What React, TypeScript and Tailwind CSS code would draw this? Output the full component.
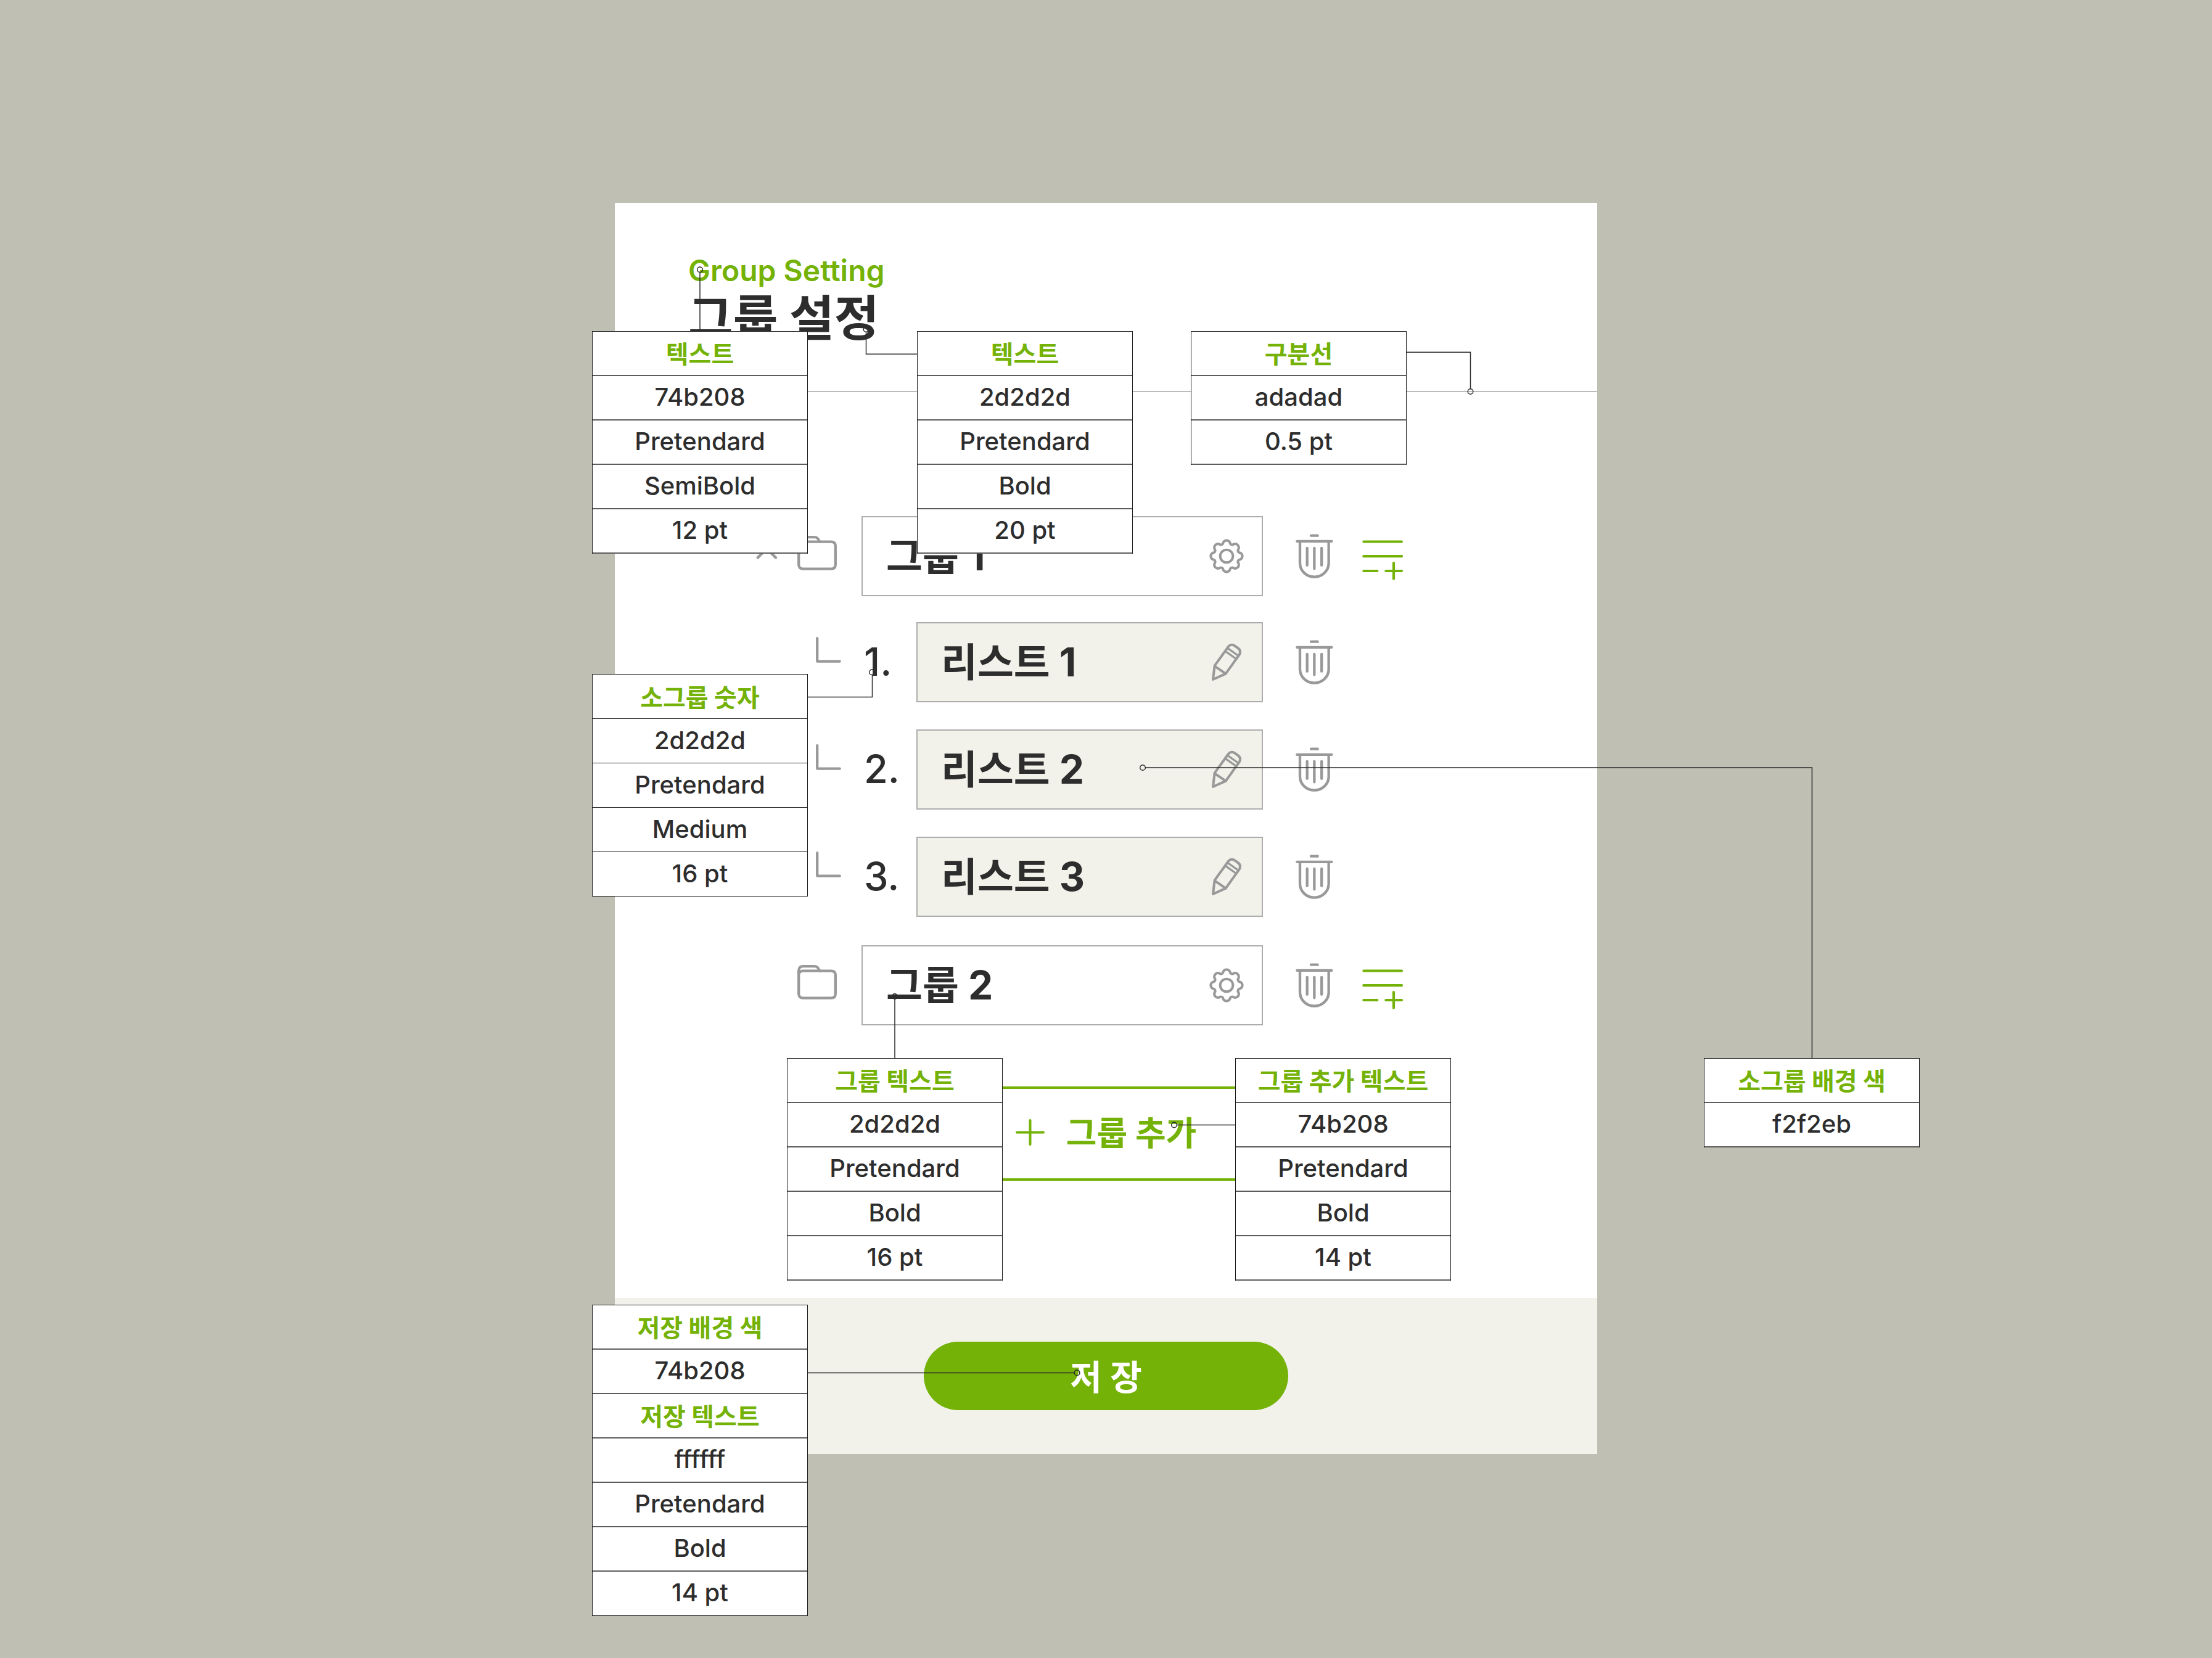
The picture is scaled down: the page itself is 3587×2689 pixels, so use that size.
import React from "react";

type Spec = { text: string; title?: boolean };
type Callout = { place: string; rule: string; label: string; rows: Spec[] };

const t = (text: string): Spec => ({ text, title: true });
const v = (text: string): Spec => ({ text });

const SOFT = "border-b-2 border-b-[#5c5c5c]";
const CRISP = "border-b border-b-[#1c1c1c]";

const callouts: Callout[] = [
  { place: "left-[-37px] top-[208px]", rule: SOFT, label: "소제목 텍스트 사양", rows: [t("텍스트"), v("74b208"), v("Pretendard"), v("SemiBold"), v("12 pt")] },
  { place: "left-[490px] top-[208px]", rule: SOFT, label: "제목 텍스트 사양", rows: [t("텍스트"), v("2d2d2d"), v("Pretendard"), v("Bold"), v("20 pt")] },
  { place: "left-[934px] top-[208px]", rule: SOFT, label: "구분선 사양", rows: [t("구분선"), v("adadad"), v("0.5 pt")] },
  { place: "left-[-37px] top-[764px]", rule: CRISP, label: "소그룹 숫자 사양", rows: [t("소그룹 숫자"), v("2d2d2d"), v("Pretendard"), v("Medium"), v("16 pt")] },
  { place: "left-[279px] top-[1387px]", rule: SOFT, label: "그룹 텍스트 사양", rows: [t("그룹 텍스트"), v("2d2d2d"), v("Pretendard"), v("Bold"), v("16 pt")] },
  { place: "left-[1006px] top-[1387px]", rule: SOFT, label: "그룹 추가 텍스트 사양", rows: [t("그룹 추가 텍스트"), v("74b208"), v("Pretendard"), v("Bold"), v("14 pt")] },
  { place: "left-[1766px] top-[1387px]", rule: SOFT, label: "소그룹 배경 색 사양", rows: [t("소그룹 배경 색"), v("f2f2eb")] },
  { place: "left-[-37px] top-[1787px]", rule: SOFT, label: "저장 버튼 사양", rows: [t("저장 배경 색"), v("74b208"), t("저장 텍스트"), v("ffffff"), v("Pretendard"), v("Bold"), v("14 pt")] },
];

function SpecTable({ place, rule, label, rows }: Callout) {
  return (
    <table
      aria-label={label}
      className={`absolute ${place} w-[350px] border-separate border-spacing-0 border-x border-t border-[#1c1c1c] bg-white text-center`}
    >
      <tbody>
        {rows.map((row, i) => (
          <tr key={i}>
            {row.title ? (
              <th scope="row" className={`h-[72px] p-0 pt-1 text-[40px] leading-[48px] font-bold text-[#74b208] ${rule}`}>
                {row.text}
              </th>
            ) : (
              <td className={`h-[72px] p-0 pb-0.5 text-[40px] leading-[48px] font-medium ${rule}`}>{row.text}</td>
            )}
          </tr>
        ))}
      </tbody>
    </table>
  );
}

/* Leader lines from each spec table to the element that it describes. */
function Connectors() {
  return (
    <svg className="pointer-events-none absolute inset-0 h-full w-full overflow-visible" fill="none" stroke="#2d2d2d" strokeWidth="1.5" aria-hidden="true">
      <circle cx="138" cy="108.3" r="4.3" />
      <path d="M138 112.6V209" />
      <circle cx="407.5" cy="205" r="4.3" />
      <path d="M407.5 209.3V245.2H491" />
      <path d="M1284 242.3H1387.5V301.5" />
      <circle cx="1387.5" cy="306" r="4.3" />
      <path d="M312 801.4H417.5V765.5" />
      <circle cx="417" cy="761.2" r="4.3" />
      <circle cx="454" cy="1287" r="4.3" />
      <path d="M454 1291.3V1388" />
      <circle cx="907" cy="1495.5" r="4.3" />
      <path d="M911.3 1495.5H1007" />
      <circle cx="856" cy="916" r="4.3" />
      <path d="M860.3 916H1941.4V1388" />
      <path d="M312 1897.4H745.3" />
      <circle cx="749.6" cy="1897.4" r="4.3" />
    </svg>
  );
}

function FolderIcon() {
  return (
    <svg className="h-14 w-16" viewBox="0 0 64 56" fill="none" stroke="#999" strokeWidth="4.3" strokeLinecap="round" strokeLinejoin="round">
      <path d="M2.2 16V9.5Q2.2 2.2 9.5 2.2H27C33 2.2 34.5 5 35.5 9.6H54.5Q61.8 9.6 61.8 16.8V46.5Q61.8 53.7 54.5 53.7H9.5Q2.2 53.7 2.2 46.5V16" />
      <path d="M2.6 14Q4 9.6 9.5 9.6H37.5" />
    </svg>
  );
}

function ChevronIcon() {
  return (
    <svg className="h-7 w-10" viewBox="0 0 40 28" fill="none" stroke="#999" strokeWidth="4.3" strokeLinecap="round" strokeLinejoin="round">
      <path d="M5.8 21.4 20.4 7 35 21.4" />
    </svg>
  );
}

function BranchIcon() {
  return (
    <svg className="h-[42px] w-[41px]" viewBox="0 0 41 42" fill="none" stroke="#999" strokeWidth="4.3" strokeLinecap="round" strokeLinejoin="round" aria-hidden="true">
      <path d="M2.2 2.2V39.6H38.8" />
    </svg>
  );
}

function TrashIcon() {
  return (
    <svg className="h-[72px] w-[61px]" viewBox="603 138 183 216" fill="none" stroke="#999" strokeWidth="13" strokeLinecap="round">
      <path d="M678 146H710M610 173.5H778M624 174V280A70 67 0 0 0 764 280V174M659 207V290M694 207V307M729.5 207V290" />
    </svg>
  );
}

function ListPlusIcon() {
  return (
    <svg className="h-[65px] w-[67px]" viewBox="927 167 201 195" fill="none" stroke="#74b208" strokeWidth="12.5" strokeLinecap="round">
      <path d="M934 174.5H1119M934 245.5H1119M934 317H1000M1042 317H1119M1080 278V355" />
    </svg>
  );
}

/* Eight outward lobes joined by small inward notches. */
const gearPath = (() => {
  const at = (deg: number) => {
    const a = (deg * Math.PI) / 180;
    return `${(268 + 68 * Math.cos(a)).toFixed(1)} ${(246 + 68 * Math.sin(a)).toFixed(1)}`;
  };
  let d = `M${at(-14)}`;
  for (let i = 0; i < 8; i++) {
    const c = i * 45;
    d += `A18 18 0 0 1 ${at(c + 14)}A11 11 0 0 0 ${at(c + 31)}`;
  }
  return d + "Z";
})();

function GearIcon() {
  return (
    <svg className="h-[58px] w-[58px]" viewBox="181 159 174 174" fill="none" stroke="#999" strokeWidth="12" strokeLinejoin="round">
      <path d={gearPath} />
      <circle cx="268" cy="246" r="31" />
    </svg>
  );
}

function PencilIcon() {
  return (
    <svg className="h-[62px] w-[58px]" viewBox="183 670 174 186" fill="none" stroke="#999" strokeWidth="12" strokeLinecap="round" strokeLinejoin="round">
      <path d="M204 847 212 780 274 694Q287 672 306 681L325 694Q342 706 333 725L266 819Z" />
      <path d="M212 782 266 819" />
      <path d="M277 696 325 730M265 710 314 745" strokeWidth="10" />
    </svg>
  );
}

function IconButton({ label, className = "", children }: { label: string; className?: string; children: React.ReactNode }) {
  return (
    <button type="button" aria-label={label} className={`shrink-0 cursor-pointer ${className}`}>
      {children}
    </button>
  );
}

function NameBox({ name, tint, children }: { name: string; tint: string; children: React.ReactNode }) {
  return (
    <div className={`flex h-[130px] min-w-0 flex-1 items-center border-2 border-[#adadad] pr-7 pl-[38px] ${tint}`}>
      <input
        aria-label={`${name} 이름`}
        defaultValue={name}
        className="mb-2.5 h-20 min-w-0 flex-1 bg-transparent text-[64px] leading-[76px] font-bold outline-none"
      />
      {children}
    </div>
  );
}

function GroupRow({ name, open }: { name: string; open?: boolean }) {
  return (
    <div className="flex items-center pr-[314px] pl-[226px]">
      <div className="mr-[30px] h-[130px] w-10 shrink-0 pt-[46px]">
        {open && (
          <IconButton label={`${name} 접기`} className="block">
            <ChevronIcon />
          </IconButton>
        )}
      </div>
      <IconButton label={`${name} 폴더`} className="mr-10 mb-2.5">
        <FolderIcon />
      </IconButton>
      <NameBox name={name} tint="bg-white">
        <IconButton label={`${name} 설정`}>
          <GearIcon />
        </IconButton>
      </NameBox>
      <IconButton label={`${name} 삭제`} className="ml-[53px]">
        <TrashIcon />
      </IconButton>
      <IconButton label={`${name}에 리스트 추가`} className="mt-3 ml-[47px]">
        <ListPlusIcon />
      </IconButton>
    </div>
  );
}

function ListRow({ index, name }: { index: number; name: string }) {
  return (
    <li className="flex items-center pr-[428px] pl-[326px]">
      <div className="mr-[37px] mb-10 shrink-0">
        <BranchIcon />
      </div>
      <span className="mb-0.5 w-[85px] shrink-0 text-[63px] leading-[76px] font-medium">{index}.</span>
      <NameBox name={name} tint="bg-[#f2f2eb]">
        <IconButton label={`${name} 수정`}>
          <PencilIcon />
        </IconButton>
      </NameBox>
      <IconButton label={`${name} 삭제`} className="ml-[53px]">
        <TrashIcon />
      </IconButton>
    </li>
  );
}

export default function App() {
  return (
    <div className="min-h-screen overflow-hidden bg-[#bfbfb3] pt-[329px] pb-[330px] font-['Inter','Noto_Sans_CJK_KR',sans-serif] text-[#2d2d2d]">
      <div className="relative mx-auto w-full max-w-[1593px]">
        <main className="bg-white">
          <header className="border-b-2 border-[#bcbcbc] pt-[82px] pb-[78px] pl-[119px]">
            <p className="text-[48px] leading-[56px] font-semibold text-[#74b208]">Group Setting</p>
            <h1 className="mt-[9px] text-[79px] leading-[80px] font-bold">그룹 설정</h1>
          </header>

          <div className="pt-[201px]">
            <GroupRow name="그룹 1" open />
            <ol className="mt-[42px] mb-[46px] flex flex-col gap-11">
              <ListRow index={1} name="리스트 1" />
              <ListRow index={2} name="리스트 2" />
              <ListRow index={3} name="리스트 3" />
            </ol>
            <GroupRow name="그룹 2" />
          </div>

          <div className="flex justify-center pt-[99px] pb-[190px]">
            <button type="button" className="flex h-[153px] w-[651px] cursor-pointer items-center justify-center gap-[35px] border-y-4 border-[#74b208] text-[#74b208]">
              <svg className="mb-1 h-[43px] w-[47px]" viewBox="0 0 47 43" fill="none" stroke="currentColor" strokeWidth="4" strokeLinecap="round" aria-hidden="true">
                <path d="M2 21.5H45M23.5 2V41" />
              </svg>
              <span className="text-[54px] leading-[64px] font-bold">그룹 추가</span>
            </button>
          </div>

          <footer className="flex justify-center bg-[#f2f2eb] pt-[71px] pb-[71px]">
            <button type="button" className="h-[111px] w-[591px] cursor-pointer rounded-full bg-[#74b208] pt-1 text-[56px] leading-[64px] font-bold text-white">
              저 장
            </button>
          </footer>
        </main>

        <Connectors />
        {callouts.map((c) => (
          <SpecTable key={c.label} {...c} />
        ))}
      </div>
    </div>
  );
}
